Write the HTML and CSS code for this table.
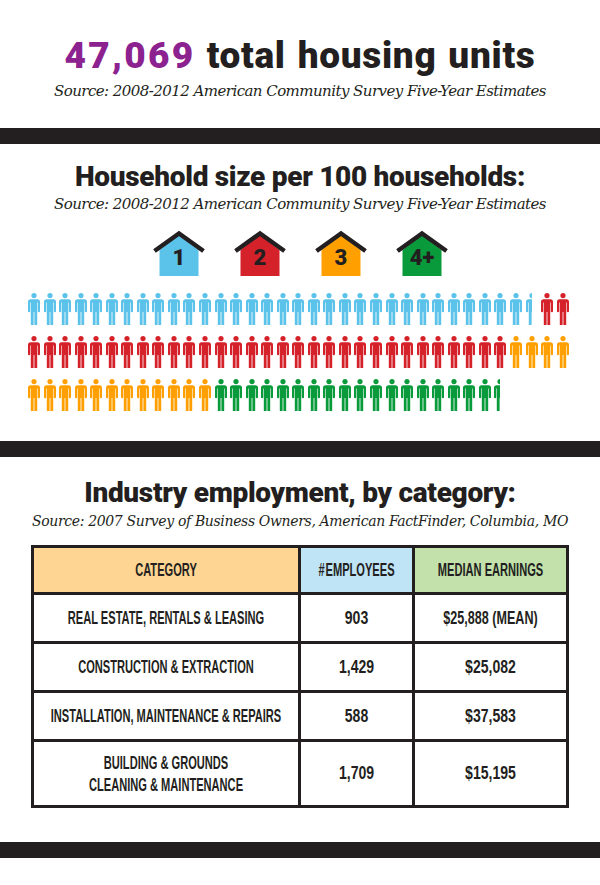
FILE: index.html
```html
<!DOCTYPE html>
<html lang="en">
<head>
<meta charset="utf-8">
<title>Columbia housing and employment</title>
<link rel="stylesheet" href="styles.css">
</head>
<body>
<svg class="defs" aria-hidden="true">
  <symbol id="man" viewBox="0 0 12 32">
    <circle cx="6" cy="2.6" r="2.6"/>
    <path d="M2.6 6.2H9.4A2.6 2.6 0 0 1 12 8.8V18.2A1.1 1.1 0 0 1 9.8 18.2V9.6H9.2V32H6.4V19H5.6V32H2.8V9.6H2.2V18.2A1.1 1.1 0 0 1 0 18.2V8.8A2.6 2.6 0 0 1 2.6 6.2Z"/>
  </symbol>
</svg>

<header class="hero">
  <h1 class="title"><span class="num">47,069</span> <span class="rest">total housing units</span></h1>
  <p class="source">Source: 2008-2012 American Community Survey Five-Year Estimates</p>
</header>

<div class="rule"></div>

<section class="households">
  <h2 class="heading">Household size per 100 households:</h2>
  <p class="source">Source: 2008-2012 American Community Survey Five-Year Estimates</p>
  <div class="houses">
    <svg class="house blue" viewBox="0 0 52 46"><polygon class="body" points="6.5,20 26,5 45.5,20 45.5,46 6.5,46"/><polyline class="roof" points="1.5,21 26,3.5 50.5,21"/><text class="label" x="26" y="34.5">1</text></svg>
    <svg class="house red" viewBox="0 0 52 46"><polygon class="body" points="6.5,20 26,5 45.5,20 45.5,46 6.5,46"/><polyline class="roof" points="1.5,21 26,3.5 50.5,21"/><text class="label" x="26" y="34.5">2</text></svg>
    <svg class="house orange" viewBox="0 0 52 46"><polygon class="body" points="6.5,20 26,5 45.5,20 45.5,46 6.5,46"/><polyline class="roof" points="1.5,21 26,3.5 50.5,21"/><text class="label" x="26" y="34.5">3</text></svg>
    <svg class="house green" viewBox="0 0 52 46"><polygon class="body" points="6.5,20 26,5 45.5,20 45.5,46 6.5,46"/><polyline class="roof" points="1.5,21 26,3.5 50.5,21"/><text class="label" x="26" y="34.5">4+</text></svg>
  </div>
  <div class="people" id="people"></div>
</section>

<div class="rule"></div>

<section class="industry">
  <h2 class="heading">Industry employment, by category:</h2>
  <p class="source small">Source: 2007 Survey of Business Owners, American FactFinder, Columbia, MO</p>
  <table class="jobs">
    <colgroup>
      <col class="c1">
      <col class="c2">
      <col class="c3">
    </colgroup>
    <thead>
      <tr>
        <th class="h-cat"><span class="t">CATEGORY</span></th>
        <th class="h-emp"><span class="t">#&#8202;EMPLOYEES</span></th>
        <th class="h-earn"><span class="t">MEDIAN EARNINGS</span></th>
      </tr>
    </thead>
    <tbody>
      <tr>
        <td><span class="t">REAL ESTATE, RENTALS &amp; LEASING</span></td>
        <td><span class="t n">903</span></td>
        <td><span class="t m">$25,888 (MEAN)</span></td>
      </tr>
      <tr>
        <td><span class="t">CONSTRUCTION &amp; EXTRACTION</span></td>
        <td><span class="t n">1,429</span></td>
        <td><span class="t n">$25,082</span></td>
      </tr>
      <tr>
        <td><span class="t">INSTALLATION, MAINTENANCE &amp; REPAIRS</span></td>
        <td><span class="t n">588</span></td>
        <td><span class="t n">$37,583</span></td>
      </tr>
      <tr class="tall">
        <td><span class="t">BUILDING &amp; GROUNDS<br>CLEANING &amp; MAINTENANCE</span></td>
        <td><span class="t n">1,709</span></td>
        <td><span class="t n">$15,195</span></td>
      </tr>
    </tbody>
  </table>
</section>

<div class="rule"></div>

<script src="script.js"></script>
</body>
</html>
```

FILE: styles.css
```css
* { box-sizing: border-box; }

body {
  margin: 0;
  background: #ffffff;
  color: #231f20;
  font-family: "Roboto", "Liberation Sans", sans-serif;
}

.defs {
  position: absolute;
  width: 0;
  height: 0;
  overflow: hidden;
}

/* ---------- headings ---------- */
.hero {
  padding: 35px 0 27px;
  text-align: center;
}

.title {
  margin: 0;
  font-size: 37px;
  line-height: 41px;
  font-weight: 900;
  word-spacing: 2px;
}

.title .num {
  color: #8c2290;
  letter-spacing: 2.3px;
}

.title .rest { letter-spacing: 0.7px; }

.source {
  margin: 0;
  font-family: "DejaVu Serif", "Liberation Serif", serif;
  font-style: italic;
  font-size: 15px;
  line-height: 20px;
  letter-spacing: -0.55px;
  text-align: center;
}

.source.small {
  font-size: 14px;
  letter-spacing: -0.35px;
}

.hero .source { margin-top: 5px; }

.heading {
  margin: 0;
  font-size: 28px;
  line-height: 32px;
  font-weight: 900;
  letter-spacing: -0.3px;
  text-align: center;
}

.rule {
  height: 16px;
  background: #231f20;
}

/* ---------- households ---------- */
.households {
  padding-top: 17px;
}

.households .source { margin-top: 1px; }

.houses {
  display: flex;
  justify-content: center;
  gap: 29px;
  margin-top: 16px;
}

.house {
  display: block;
  width: 52px;
  height: 46px;
  overflow: visible;
}

.roof {
  fill: none;
  stroke: #231f20;
  stroke-width: 4.5;
  stroke-linejoin: miter;
}

.label {
  font-family: "Roboto", "Liberation Sans", sans-serif;
  font-weight: 900;
  font-size: 22px;
  fill: #231f20;
  text-anchor: middle;
}

.house.blue .body { fill: #5bc2ea; }
.house.red .body { fill: #d52129; }
.house.orange .body { fill: #ff9f00; }
.house.green .body { fill: #089a3b; }

.people {
  display: flex;
  flex-direction: column;
  gap: 11px;
  width: 541px;
  margin: 17px 0 30px 28px;
}

.prow {
  display: flex;
  gap: 3.56px;
}

.slot {
  flex: none;
  width: 12px;
  height: 32px;
}

.clip {
  height: 32px;
  overflow: hidden;
}

.man {
  display: block;
  width: 12px;
  height: 32px;
}

.man.b { fill: #5bc2ea; }
.man.r { fill: #d52129; }
.man.o { fill: #ff9f00; }
.man.g { fill: #089a3b; }

/* ---------- industry ---------- */
.industry {
  padding: 20px 0 34px;
}

.industry .source { margin-top: 2px; }

.jobs {
  margin: 14px 0 0 31px;
  border-collapse: collapse;
  border: 3px solid #231f20;
  table-layout: fixed;
  width: 535px;
}

.c1 { width: 267px; }
.c2 { width: 114px; }
.c3 { width: 154px; }

.jobs th,
.jobs td {
  border: 3px solid #231f20;
  padding: 0;
  text-align: center;
  vertical-align: middle;
  height: 49px;
  color: #231f20;
}

.jobs thead th { height: 47px; }
.jobs tr.tall td { height: 66px; }

.h-cat { background: #fed593; }
.h-emp { background: #bfe4f6; }
.h-earn { background: #c2e1ab; }

/* condensed display face: narrow base size stretched to full cap height */
.t {
  display: block;
  font-family: "Liberation Sans", Arial, sans-serif;
  font-weight: 700;
  font-size: 11.1px;
  line-height: 13px;
  white-space: nowrap;
  text-align: center;
  transform: scaleY(1.667);
}

.t.n {
  font-size: 14.06px;
  transform: scaleY(1.316);
}

.t.m {
  font-size: 12.58px;
  transform: scaleY(1.47);
}
```

FILE: script.js
```js
// Household size per 100 households: [colour, count] per row (35 slots a row)
var ROWS = [
  [["b", 32], ["b", 0.5], ["r", 2]],
  [["r", 31], ["o", 4]],
  [["o", 12], ["g", 18], ["g", 0.5]]
];

var people = document.getElementById("people");

function slot(colour, fraction) {
  var s = document.createElement("div");
  s.className = "slot";
  var clip = document.createElement("div");
  clip.className = "clip";
  clip.style.width = (fraction * 100) + "%";
  clip.innerHTML = '<svg class="man ' + colour + '" viewBox="0 0 12 32"><use href="#man"/></svg>';
  s.appendChild(clip);
  return s;
}

ROWS.forEach(function (row) {
  var r = document.createElement("div");
  r.className = "prow";
  row.forEach(function (part) {
    var whole = Math.floor(part[1]);
    var frac = part[1] - whole;
    for (var i = 0; i < whole; i++) r.appendChild(slot(part[0], 1));
    if (frac > 0) r.appendChild(slot(part[0], frac));
  });
  people.appendChild(r);
});
```
